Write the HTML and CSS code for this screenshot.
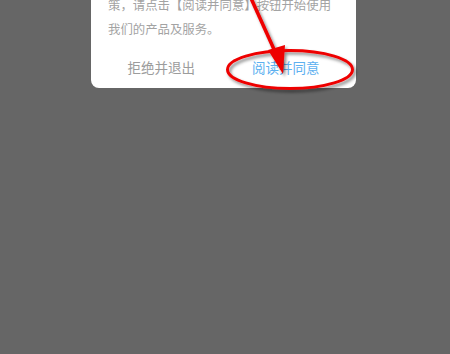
FILE: index.html
```html
<!DOCTYPE html>
<html lang="zh">
<head>
<meta charset="utf-8">
<link rel="stylesheet" href="styles.css">
</head>
<body>
<div class="page">
  <div class="card">
    <div class="body">
      <p class="line">策，请点击【阅读并同意】按钮开始使用</p>
      <p class="line">我们的产品及服务。</p>
    </div>
    <div class="actions">
      <div class="btn reject">拒绝并退出</div>
      <div class="btn agree">阅读并同意</div>
    </div>
  </div>
  <svg class="mark" width="450" height="354" viewBox="0 0 450 354">
    <defs>
      <filter id="sh" x="-20%" y="-20%" width="140%" height="140%">
        <feDropShadow dx="2" dy="2.5" stdDeviation="1.5" flood-color="#000" flood-opacity="0.45"/>
      </filter>
    </defs>
    <g filter="url(#sh)">
      <ellipse cx="290" cy="69.5" rx="62.5" ry="19" fill="none" stroke="#ee0000" stroke-width="3"/>
      <line x1="250" y1="-4" x2="277" y2="56" stroke="#ee0000" stroke-width="3.5"/>
      <polygon points="283,74 268,50 285,45" fill="#ee0000"/>
    </g>
  </svg>
</div>
</body>
</html>
```
FILE: styles.css
```css
html, body {
  margin: 0;
  padding: 0;
  background: #666666;
}
.page {
  position: relative;
  width: 450px;
  height: 354px;
  overflow: hidden;
  font-family: "Noto Sans CJK SC", "Noto Sans", sans-serif;
}
.card {
  width: 265px;
  margin: -27px 0 0 91px;
  background: #ffffff;
  border-radius: 0 0 8px 8px;
  padding-top: 20px;
}
.body {
  padding: 0 17px;
}
.line {
  margin: 0;
  font-size: 12.4px;
  line-height: 24px;
  color: #a3a3a3;
  white-space: nowrap;
}
.actions {
  display: flex;
  padding: 5px 8px 0;
  height: 42px;
  align-items: center;
}
.btn {
  flex: 1;
  text-align: center;
  font-size: 13.5px;
}
.reject {
  color: #9c9c9c;
}
.agree {
  color: #5cb0f0;
}
.mark {
  position: absolute;
  left: 0;
  top: 0;
  pointer-events: none;
}
```
